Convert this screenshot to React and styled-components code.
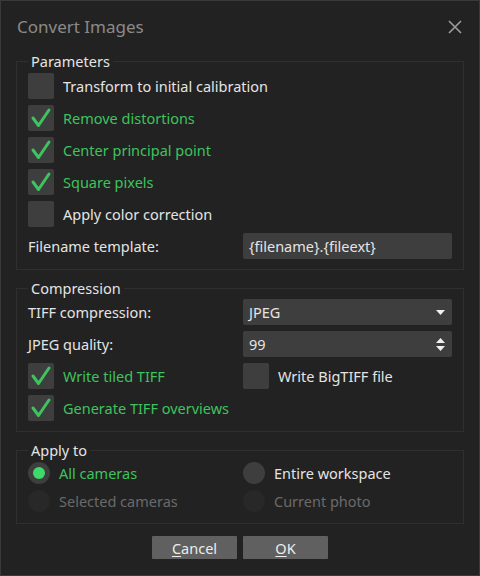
import React from 'react';
import styled, { createGlobalStyle } from 'styled-components';

const Global = createGlobalStyle`
  html, body {
    margin: 0;
    padding: 0;
    background: #222222;
  }
  * { box-sizing: border-box; }
`

const Window = styled.div`
  width: 480px;
  height: 576px;
  background: #222222;
  border: 1px solid #3a3a3a;
  font-family: "Noto Sans", "Open Sans", sans-serif;
  font-size: 14.5px;
  color: #e4e4e4;
  display: flex;
  flex-direction: column;
`
const TitleBar = styled.div`
  height: 50px;
  padding: 1px 16px 0 16px;
  display: flex;
  align-items: center;
  justify-content: space-between;
`
const Title = styled.div`
  font-size: 17px;
  color: #8a8a8a;
`
const Close = styled.button`
  border: 0;
  background: none;
  padding: 0;
  width: 16px;
  height: 16px;
  display: flex;
`
const Body = styled.div`
  padding: 0 15px;
  display: flex;
  flex-direction: column;
  gap: 8px;
`
const Group = styled.fieldset`
  margin: 0;
  border: 1px solid #2f2f2f;
  padding: 0 11px 10px 11px;
  min-width: 0;
`
const Legend = styled.legend`
  padding: 0 3px;
  line-height: 20px;
  color: #e4e4e4;
`
const Rows = styled.div`
  display: flex;
  flex-direction: column;
  gap: ${p => p.gap || 6}px;
  padding-top: ${p => p.top || 1}px;
`
const Row = styled.div`
  display: grid;
  grid-template-columns: 215px 1fr;
  align-items: center;
  min-height: ${p => p.h || 26}px;
`
const CheckRow = styled.label`
  display: flex;
  align-items: center;
  gap: 9px;
  height: 26px;
  color: ${p => (p.on ? '#3ec35e' : '#e4e4e4')};
`
const Box = styled.span`
  width: 26px;
  height: 26px;
  border-radius: 2px;
  background: #3e3e3e;
  display: flex;
  flex: none;
`
const Field = styled.div`
  height: 26px;
  background: #3e3e3e;
  border-radius: 2px;
  padding: 0 7px 0 6px;
  display: flex;
  align-items: center;
  justify-content: space-between;
  color: #e4e4e4;
`
const RadioRow = styled.div`
  display: flex;
  align-items: center;
  gap: 9px;
  height: 24px;
  color: ${p => (p.disabled ? '#6a6a6a' : p.on ? '#3ec35e' : '#e4e4e4')};
`
const Radio = styled.span`
  width: 22px;
  height: 22px;
  border-radius: 50%;
  background: ${p => (p.disabled ? '#282828' : '#3e3e3e')};
  display: flex;
  align-items: center;
  justify-content: center;
  flex: none;
  &::after {
    content: '';
    display: ${p => (p.on ? 'block' : 'none')};
    width: 12px;
    height: 12px;
    border-radius: 50%;
    background: #3ddc6a;
  }
`
const Buttons = styled.div`
  display: flex;
  justify-content: center;
  gap: 6px;
  margin-top: 4px;
`
const Button = styled.button`
  width: 85px;
  height: 23px;
  border: 0;
  border-radius: 1px;
  background: #606060;
  color: #ececec;
  font-family: inherit;
  font-size: 14.5px;
  padding: 0;
  u { text-decoration-thickness: 1px; text-underline-offset: 2px; }
`

const Tick = () => (
  <svg width="26" height="26" viewBox="0 0 26 26">
    <path d="M5 13 L10.5 20.5 L21 5" fill="none" stroke="#3ec35e" strokeWidth="3" strokeLinecap="round" strokeLinejoin="round" />
  </svg>
)

const Check = ({ on, children }) => (
  <CheckRow on={on}>
    <Box>{on && <Tick />}</Box>
    {children}
  </CheckRow>
)

const Opt = ({ on, disabled, children }) => (
  <RadioRow on={on} disabled={disabled}>
    <Radio on={on} disabled={disabled} />
    {children}
  </RadioRow>
)

const Arrow = () => (
  <svg width="9" height="5" viewBox="0 0 9 5"><path d="M0 0 H9 L4.5 5 Z" fill="#f0f0f0" /></svg>
)
const Spin = () => (
  <svg width="9" height="13" viewBox="0 0 9 13">
    <path d="M0 5 H9 L4.5 0 Z M0 8 H9 L4.5 13 Z" fill="#f0f0f0" />
  </svg>
)

export default function App() {
  return (
    <Window>
      <Global />
      <TitleBar>
        <Title>Convert Images</Title>
        <Close>
          <svg width="16" height="16" viewBox="0 0 16 16">
            <path d="M2 2 L14 14 M14 2 L2 14" stroke="#9a9a9a" strokeWidth="1.7" />
          </svg>
        </Close>
      </TitleBar>
      <Body>
        <Group>
          <Legend>Parameters</Legend>
          <Rows top={2}>
            <Check>Transform to initial calibration</Check>
            <Check on>Remove distortions</Check>
            <Check on>Center principal point</Check>
            <Check on>Square pixels</Check>
            <Check>Apply color correction</Check>
            <Row>
              <span>Filename template:</span>
              <Field>{'{filename}.{fileext}'}</Field>
            </Row>
          </Rows>
        </Group>
        <Group>
          <Legend>Compression</Legend>
          <Rows>
            <Row>
              <span>TIFF compression:</span>
              <Field>JPEG<Arrow /></Field>
            </Row>
            <Row>
              <span>JPEG quality:</span>
              <Field>99<Spin /></Field>
            </Row>
            <Row>
              <Check on>Write tiled TIFF</Check>
              <Check>Write BigTIFF file</Check>
            </Row>
            <Check on>Generate TIFF overviews</Check>
          </Rows>
        </Group>
        <Group>
          <Legend>Apply to</Legend>
          <Rows gap={4}>
            <Row h={24}>
              <Opt on>All cameras</Opt>
              <Opt>Entire workspace</Opt>
            </Row>
            <Row h={24}>
              <Opt disabled>Selected cameras</Opt>
              <Opt disabled>Current photo</Opt>
            </Row>
          </Rows>
        </Group>
        <Buttons>
          <Button><u>C</u>ancel</Button>
          <Button><u>O</u>K</Button>
        </Buttons>
      </Body>
    </Window>
  );
}
